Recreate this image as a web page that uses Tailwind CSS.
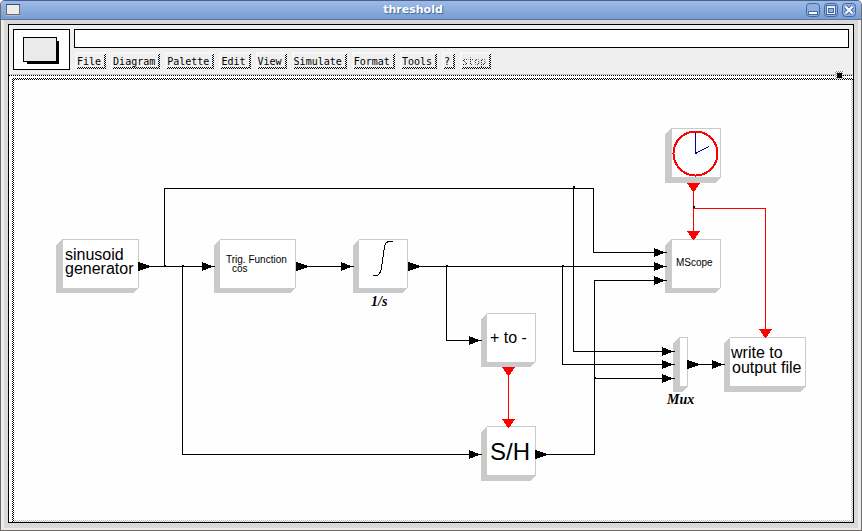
<!DOCTYPE html>
<html lang="en">
<head>
<meta charset="utf-8">
<title>threshold</title>
<script src="https://cdn.jsdelivr.net/npm/@tailwindcss/browser@4"></script>
</head>
<body class="h-screen bg-white">
<div class="flex h-full flex-col overflow-hidden rounded-t-[5px] border border-[#6e6c6a] border-t-[#4a6084] bg-[#d9d9d9]">
  <header class="flex h-[19px] shrink-0 items-center border-b border-[#5076ac] bg-linear-to-b from-[#9dbbe8] to-[#799dd0] px-[5px]">
    <svg class="h-3 w-[14px]" viewBox="0 0 14 12" shape-rendering="crispEdges" aria-hidden="true">
      <rect width="14" height="11" fill="#6c6b69"/><rect width="14" height="1" fill="#35507c"/><rect x="1" y="1" width="12" height="9" fill="#ededeb"/><rect y="11" width="14" height="1" fill="#a5b8d6"/>
    </svg>
    <h1 class="flex-1 text-center font-['DejaVu_Sans',sans-serif] text-[11px] leading-4 font-bold text-white [text-shadow:1px_1px_1px_#3d64a0]">threshold</h1>
    <div class="flex gap-1">
      <button class="h-[14px] w-[14px]" aria-label="Minimize"><svg viewBox="0 0 14 14" class="block"><rect x=".5" y=".5" width="13" height="13" rx="3" fill="#8eafe0" stroke="#41689f"/><rect x="2.5" y="8.5" width="9" height="3" fill="#fff" stroke="#41689f"/></svg></button>
      <button class="h-[14px] w-[14px]" aria-label="Maximize"><svg viewBox="0 0 14 14" class="block"><rect x=".5" y=".5" width="13" height="13" rx="3" fill="#8eafe0" stroke="#41689f"/><rect x="2.5" y="2.5" width="9" height="9" fill="#e8f0fc" stroke="#41689f"/><rect x="4.5" y="5.500" width="5" height="4" fill="#8eafe0" stroke="#41689f"/></svg></button>
      <button class="h-[14px] w-[14px]" aria-label="Close"><svg viewBox="0 0 14 14" class="block"><rect x=".5" y=".5" width="13" height="13" rx="3" fill="#8eafe0" stroke="#41689f"/><path d="M3.500 3.500l7 7M10.500 3.500l-7 7" stroke="#41689f" stroke-width="4"/><path d="M3.500 3.500l7 7M10.500 3.500l-7 7" stroke="#fff" stroke-width="2.200"/></svg></button>
    </div>
  </header>

  <div class="flex min-h-0 flex-1 flex-col border-x-[3px] border-b-2 border-[#eeecea] px-1 pt-1 pb-[5px]">
    <div class="flex min-h-0 flex-1 flex-col border border-black bg-white">
      <div class="relative flex shrink-0 gap-1 border-b border-[#c6c6c6] bg-[#efefef] p-1">
        <svg class="h-[41px] w-[57px] shrink-0" viewBox="0 0 57 41" shape-rendering="crispEdges" aria-hidden="true">
          <rect width="57" height="41"/><rect x="1" y="1" width="55" height="39" fill="#fff"/>
          <rect x="14" y="12" width="32" height="23"/><rect x="10" y="8" width="34" height="25"/><rect x="11" y="9" width="32" height="23" fill="#eaeaea"/>
        </svg>
        <div class="flex min-w-0 flex-1 flex-col">
          <input class="h-[19px] w-full border border-black bg-white px-1 font-['DejaVu_Sans_Mono',monospace] text-[10px] outline-none" aria-label="Message">
          <nav class="mt-1 ml-px flex gap-[5px] font-['DejaVu_Sans_Mono',monospace] text-[10px] text-black">
            <button class="relative bg-[repeating-conic-gradient(#fff_0_25%,#efefef_0_50%)] bg-[length:2px_2px] pt-[2px] pl-[2px] before:absolute before:right-0 before:bottom-0 before:left-[2px] before:h-[2px] before:bg-[repeating-conic-gradient(#000_0_25%,#efefef_0_50%)] before:bg-[length:2px_2px] after:absolute after:top-[2px] after:right-0 after:bottom-0 after:w-[2px] after:bg-[repeating-conic-gradient(#000_0_25%,#efefef_0_50%)] after:bg-[length:2px_2px]"><span class="block bg-[#efefef] pr-[5px] leading-[15px]">File</span></button>
            <button class="relative bg-[repeating-conic-gradient(#fff_0_25%,#efefef_0_50%)] bg-[length:2px_2px] pt-[2px] pl-[2px] before:absolute before:right-0 before:bottom-0 before:left-[2px] before:h-[2px] before:bg-[repeating-conic-gradient(#000_0_25%,#efefef_0_50%)] before:bg-[length:2px_2px] after:absolute after:top-[2px] after:right-0 after:bottom-0 after:w-[2px] after:bg-[repeating-conic-gradient(#000_0_25%,#efefef_0_50%)] after:bg-[length:2px_2px]"><span class="block bg-[#efefef] pr-[5px] leading-[15px]">Diagram</span></button>
            <button class="relative bg-[repeating-conic-gradient(#fff_0_25%,#efefef_0_50%)] bg-[length:2px_2px] pt-[2px] pl-[2px] before:absolute before:right-0 before:bottom-0 before:left-[2px] before:h-[2px] before:bg-[repeating-conic-gradient(#000_0_25%,#efefef_0_50%)] before:bg-[length:2px_2px] after:absolute after:top-[2px] after:right-0 after:bottom-0 after:w-[2px] after:bg-[repeating-conic-gradient(#000_0_25%,#efefef_0_50%)] after:bg-[length:2px_2px]"><span class="block bg-[#efefef] pr-[5px] leading-[15px]">Palette</span></button>
            <button class="relative bg-[repeating-conic-gradient(#fff_0_25%,#efefef_0_50%)] bg-[length:2px_2px] pt-[2px] pl-[2px] before:absolute before:right-0 before:bottom-0 before:left-[2px] before:h-[2px] before:bg-[repeating-conic-gradient(#000_0_25%,#efefef_0_50%)] before:bg-[length:2px_2px] after:absolute after:top-[2px] after:right-0 after:bottom-0 after:w-[2px] after:bg-[repeating-conic-gradient(#000_0_25%,#efefef_0_50%)] after:bg-[length:2px_2px]"><span class="block bg-[#efefef] pr-[5px] leading-[15px]">Edit</span></button>
            <button class="relative bg-[repeating-conic-gradient(#fff_0_25%,#efefef_0_50%)] bg-[length:2px_2px] pt-[2px] pl-[2px] before:absolute before:right-0 before:bottom-0 before:left-[2px] before:h-[2px] before:bg-[repeating-conic-gradient(#000_0_25%,#efefef_0_50%)] before:bg-[length:2px_2px] after:absolute after:top-[2px] after:right-0 after:bottom-0 after:w-[2px] after:bg-[repeating-conic-gradient(#000_0_25%,#efefef_0_50%)] after:bg-[length:2px_2px]"><span class="block bg-[#efefef] pr-[5px] leading-[15px]">View</span></button>
            <button class="relative bg-[repeating-conic-gradient(#fff_0_25%,#efefef_0_50%)] bg-[length:2px_2px] pt-[2px] pl-[2px] before:absolute before:right-0 before:bottom-0 before:left-[2px] before:h-[2px] before:bg-[repeating-conic-gradient(#000_0_25%,#efefef_0_50%)] before:bg-[length:2px_2px] after:absolute after:top-[2px] after:right-0 after:bottom-0 after:w-[2px] after:bg-[repeating-conic-gradient(#000_0_25%,#efefef_0_50%)] after:bg-[length:2px_2px]"><span class="block bg-[#efefef] pr-[5px] leading-[15px]">Simulate</span></button>
            <button class="relative bg-[repeating-conic-gradient(#fff_0_25%,#efefef_0_50%)] bg-[length:2px_2px] pt-[2px] pl-[2px] before:absolute before:right-0 before:bottom-0 before:left-[2px] before:h-[2px] before:bg-[repeating-conic-gradient(#000_0_25%,#efefef_0_50%)] before:bg-[length:2px_2px] after:absolute after:top-[2px] after:right-0 after:bottom-0 after:w-[2px] after:bg-[repeating-conic-gradient(#000_0_25%,#efefef_0_50%)] after:bg-[length:2px_2px]"><span class="block bg-[#efefef] pr-[5px] leading-[15px]">Format</span></button>
            <button class="relative bg-[repeating-conic-gradient(#fff_0_25%,#efefef_0_50%)] bg-[length:2px_2px] pt-[2px] pl-[2px] before:absolute before:right-0 before:bottom-0 before:left-[2px] before:h-[2px] before:bg-[repeating-conic-gradient(#000_0_25%,#efefef_0_50%)] before:bg-[length:2px_2px] after:absolute after:top-[2px] after:right-0 after:bottom-0 after:w-[2px] after:bg-[repeating-conic-gradient(#000_0_25%,#efefef_0_50%)] after:bg-[length:2px_2px]"><span class="block bg-[#efefef] pr-[5px] leading-[15px]">Tools</span></button>
            <button class="relative bg-[repeating-conic-gradient(#fff_0_25%,#efefef_0_50%)] bg-[length:2px_2px] pt-[2px] pl-[2px] before:absolute before:right-0 before:bottom-0 before:left-[2px] before:h-[2px] before:bg-[repeating-conic-gradient(#000_0_25%,#efefef_0_50%)] before:bg-[length:2px_2px] after:absolute after:top-[2px] after:right-0 after:bottom-0 after:w-[2px] after:bg-[repeating-conic-gradient(#000_0_25%,#efefef_0_50%)] after:bg-[length:2px_2px]"><span class="block bg-[#efefef] pr-[5px] leading-[15px]">?</span></button>
            <button disabled class="relative bg-[repeating-conic-gradient(#fff_0_25%,#efefef_0_50%)] bg-[length:2px_2px] pt-[2px] pl-[2px] before:absolute before:right-0 before:bottom-0 before:left-[2px] before:h-[2px] before:bg-[repeating-conic-gradient(#000_0_25%,#efefef_0_50%)] before:bg-[length:2px_2px] after:absolute after:top-[2px] after:right-0 after:bottom-0 after:w-[2px] after:bg-[repeating-conic-gradient(#000_0_25%,#efefef_0_50%)] after:bg-[length:2px_2px]"><span class="block bg-[#efefef] pr-[5px] leading-[15px]"><span class="bg-[repeating-conic-gradient(#000_0_25%,#efefef_0_50%)] bg-[length:2px_2px] bg-clip-text text-transparent">stop</span></span></button>
          </nav>
        </div>
        <div class="absolute right-[10px] -bottom-[5px] z-10 h-[8px] w-[8px] bg-[repeating-conic-gradient(#888_0_25%,#fff_0_50%)] bg-[length:2px_2px] p-[2px]"><div class="h-[5px] w-[5px] bg-black"></div></div>
      </div>
      <div class="mb-[2px] h-px shrink-0 bg-[repeating-linear-gradient(90deg,#000_0_1px,#fff_1px_2px)]"></div>
      <main class="ml-[3px] flex min-h-0 flex-1 flex-col bg-[repeating-conic-gradient(#000_0_25%,#fff_0_50%)] bg-[length:2px_2px] pt-[2px] pl-[2px]">
        <div class="min-h-0 flex-1 overflow-hidden bg-[repeating-conic-gradient(#bbb_0_25%,#fff_0_50%)] bg-[length:2px_2px] pr-[2px] pb-[2px]">
          <div class="h-full overflow-auto bg-[#fefefe]">
            <svg class="block h-[440px] w-[837px] font-['Liberation_Sans',Arial,sans-serif]" viewBox="14 80 837 440" role="img" aria-label="threshold block diagram">
              <defs>
                <path id="in" d="M0-4.500V4.500L10 .500H13V-.500H10Z"/>
                <path id="out" d="M0-4.500V4.500L12 .500V-.500Z"/>
                <path id="ev" d="M-6.500 0H6.500L.500 9H-.500Z" fill="#f00"/>
              </defs>
              <g shape-rendering="crispEdges">
                <!-- block shadows -->
                <path fill="#cacaca" d="M62 239L56 245V293H133L139 288V239ZM220 239L214 245V293H290L296 288V239ZM359 239L353 245V293H402L408 288V239ZM487 313L481 319V367H530L536 362V313ZM487 426L481 432V481H530L536 475V426ZM671 128L665 134V183H715L721 177V128ZM671 239L665 245V293H715L721 288V239ZM679 337L673 343V392H682L688 386V337ZM730 337L724 343V392H800L806 386V337Z"/>
                <!-- block faces -->
                <path fill="#fff" d="M63 240H138V288H63ZM220 240H295V288H220ZM359 240H407V288H359ZM487 314H535V362H487ZM487 427H535V475H487ZM672 129H720V177H672ZM672 240H720V288H672ZM680 338H687V386H680ZM730 338H805V386H730Z"/>
                <!-- signal links -->
                <path fill="none" stroke="#000" d="M150 266.500H204M164.500 266V188.500H593.500V252.500H656M182.500 266V454.500H471M308 266.500H343M420 266.500H656M446.500 266V340.500H471M562.500 266V364.500H664M573.500 188V351.500H664M547 454.500H594.500V280.500H656M594 378.500H664M698 364.500H714"/>
                <path d="M164 265h2v2h-2zM182 265h2v2h-2zM446 265h2v2h-2zM562 265h2v2h-2zM573 186h2v2h-2zM594 377h2v2h-2z"/>
                <!-- event links -->
                <path fill="none" stroke="#f00" d="M508.500 375V420M693.500 190V233M693 208.500H765.500V331"/>
                <path d="M693 206h2v2h-2z"/>
                <use href="#out" x="138" y="266.500"/><use href="#out" x="296" y="266.500"/><use href="#out" x="408" y="266.500"/><use href="#out" x="535" y="454.500"/><use href="#out" x="687" y="364.500"/>
                <use href="#in" x="202" y="266.500"/><use href="#in" x="341" y="266.500"/><use href="#in" x="469" y="340.500"/><use href="#in" x="469" y="454.500"/>
                <use href="#in" x="654" y="252.500"/><use href="#in" x="654" y="266.500"/><use href="#in" x="654" y="280.500"/>
                <use href="#in" x="662" y="351.500"/><use href="#in" x="662" y="364.500"/><use href="#in" x="662" y="378.500"/><use href="#in" x="712" y="364.500"/>
                <use href="#ev" x="508.500" y="367"/><use href="#ev" x="508.500" y="419"/><use href="#ev" x="693.500" y="183"/><use href="#ev" x="693.500" y="231"/><use href="#ev" x="765.500" y="329"/>
                <!-- clock and integral drawings -->
                <circle cx="695.500" cy="153.500" r="22" fill="none" stroke="#f00" stroke-width="2"/>
                <path fill="none" stroke="#00009a" d="M695.500 133V153.500L709 146.500"/>
                <path fill="none" stroke="#000" d="M373 275.500H377C380 274 381 272 381.500 268L384.500 247C385 244 386 242 389 241.500H393"/>
              </g>
              <g class="text-[16px]">
                <text x="65" y="260">sinusoid</text><text x="65" y="274">generator</text>
                <text x="490" y="343">+ to -</text>
                <text x="731" y="358">write to</text><text x="732" y="373">output file</text>
              </g>
              <g class="text-[10px]">
                <text x="226" y="263">Trig. Function</text><text x="232" y="272">cos</text><text x="676" y="266">MScope</text>
              </g>
              <text class="text-[24px]" x="490" y="460">S/H</text>
              <g class="font-['Liberation_Serif',serif] text-[14px] font-bold italic">
                <text x="371" y="306">1/s</text><text x="667" y="404">Mux</text>
              </g>
            </svg>
          </div>
        </div>
      </main>
    </div>
  </div>
</div>
</body>
</html>
